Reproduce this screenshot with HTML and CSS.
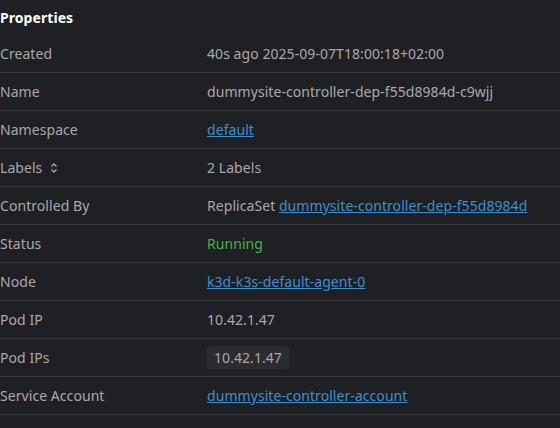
FILE: index.html
```html
<!DOCTYPE html>
<html>
<head>
<meta charset="utf-8">
<link rel="stylesheet" href="styles.css">
</head>
<body>
<div class="panel">
  <div class="title">Properties</div>
  <div class="row"><div class="key">Created</div><div class="val">40s ago 2025-09-07T18:00:18+02:00</div></div>
  <div class="row"><div class="key">Name</div><div class="val">dummysite-controller-dep-f55d8984d-c9wjj</div></div>
  <div class="row"><div class="key">Namespace</div><div class="val"><a href="#">default</a></div></div>
  <div class="row"><div class="key">Labels <svg class="sort" width="8" height="12" viewBox="0 0 8 12"><path d="M1.5 4.5 L4 2 L6.5 4.5 M1.5 7.5 L4 10 L6.5 7.5" fill="none" stroke="currentColor" stroke-width="1.3"/></svg></div><div class="val">2 Labels</div></div>
  <div class="row"><div class="key">Controlled By</div><div class="val">ReplicaSet <a href="#">dummysite-controller-dep-f55d8984d</a></div></div>
  <div class="row"><div class="key">Status</div><div class="val ok">Running</div></div>
  <div class="row"><div class="key">Node</div><div class="val"><a href="#">k3d-k3s-default-agent-0</a></div></div>
  <div class="row"><div class="key">Pod IP</div><div class="val">10.42.1.47</div></div>
  <div class="row"><div class="key">Pod IPs</div><div class="val"><span class="chip">10.42.1.47</span></div></div>
  <div class="row"><div class="key">Service Account</div><div class="val"><a href="#">dummysite-controller-account</a></div></div>
</div>
</body>
</html>
```
FILE: styles.css
```css
html, body {
  margin: 0;
  background: #1f2023;
  height: 100%;
}
body {
  font-family: "Noto Sans", "Open Sans", sans-serif;
  font-size: 14px;
  letter-spacing: 0.06px;
  color: #a9a9a9;
}
.panel {
  display: flex;
  flex-direction: column;
}
.title {
  height: 35px;
  display: flex;
  align-items: center;
  color: #ffffff;
  font-weight: bold;
  font-size: 14px;
  padding-bottom: 1px;
  box-sizing: border-box;
}
.row {
  display: flex;
  align-items: center;
  height: 37px;
  border-bottom: 1px solid #3a3b3f;
}
.key {
  width: 207px;
  flex-shrink: 0;
  display: flex;
  align-items: center;
  gap: 8px;
}
.sort {
  color: #a9a9a9;
}
.val a {
  color: #3d8fd0;
  text-decoration: underline;
}
.ok {
  color: #4caf50;
}
.chip {
  background: #2a2c2f;
  border-radius: 3px;
  padding: 2px 7px;
}
```
